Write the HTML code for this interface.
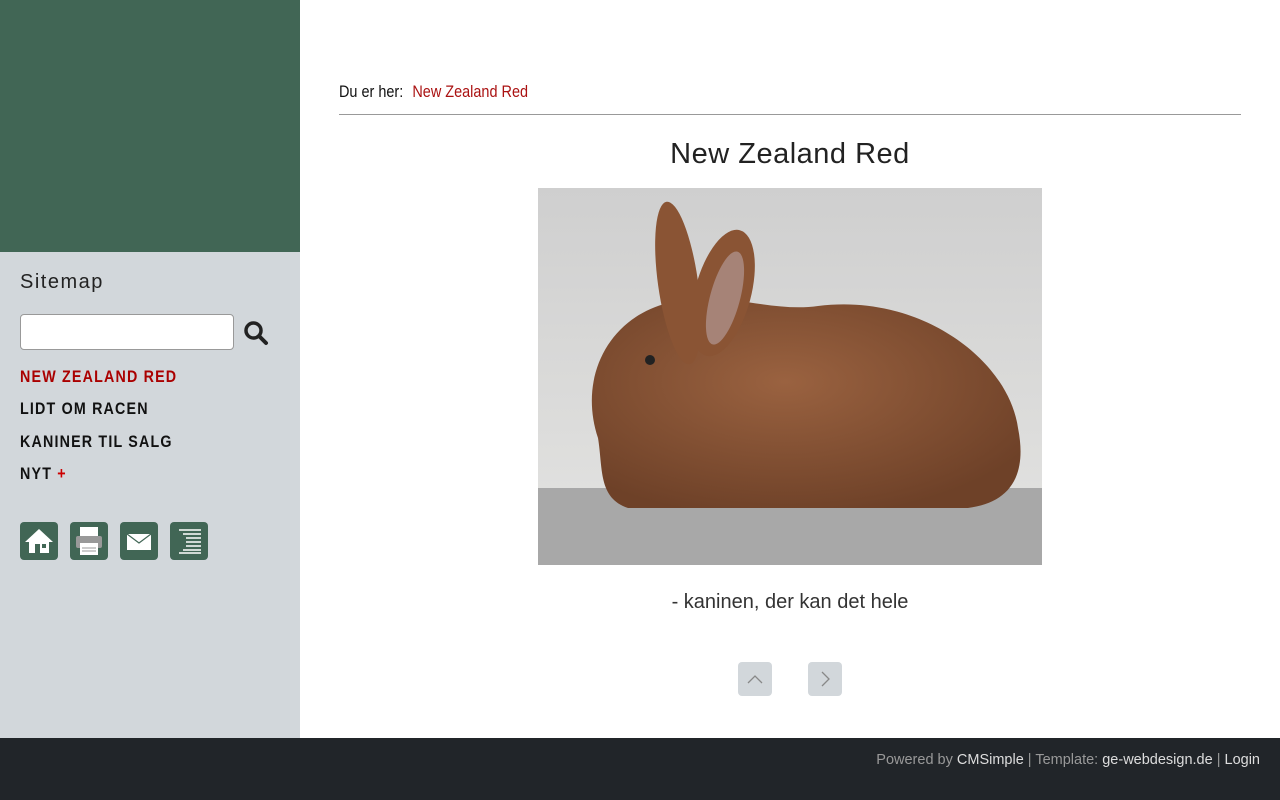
<!DOCTYPE html>
<html><head><meta charset="utf-8"><style>
*{margin:0;padding:0;box-sizing:border-box}
body{width:1280px;height:800px;position:relative;background:#fff;font-family:"Liberation Sans",sans-serif;overflow:hidden}
#hdr{position:absolute;left:0;top:0;width:300px;height:252px;background:#416655}
#side{position:absolute;left:0;top:252px;width:300px;height:486px;background:#d2d7db}
#foot{position:absolute;left:0;top:738px;width:1280px;height:62px;background:#212529;color:#999;font-size:14.5px;text-align:right;padding:14px 20px 0 0}
#foot span{color:#ddd}
.sm{position:absolute;left:20px;top:271px;font-size:20px;color:#222;letter-spacing:1.5px}
.inp{position:absolute;left:20px;top:314px;width:214px;height:36px;background:#fff;border:1px solid #999;border-radius:4px}
.nav{position:absolute;left:20px;font-weight:bold;font-size:17px;letter-spacing:1.4px;color:#111;transform:scaleX(.84);transform-origin:0 0;white-space:nowrap}
.ic{position:absolute;top:522px;width:38px;height:38px;background:#416655;border-radius:4px}
.bc{position:absolute;left:339px;top:82px;font-size:17px;color:#111;transform:scaleX(.85);transform-origin:0 0;white-space:nowrap}
.bc span{color:#a11;margin-left:6px}
hr{position:absolute;left:339px;top:114px;width:902px;border:0;border-top:1px solid #999}
h1{position:absolute;left:339px;width:902px;top:138px;text-align:center;font-weight:normal;font-size:29px;color:#222;letter-spacing:.5px}
.cap{position:absolute;left:339px;width:902px;top:591px;text-align:center;font-size:20px;color:#333}
.pg{position:absolute;top:662px;width:34px;height:34px;background:#d2d7db;border-radius:4px}
</style></head><body>
<div id="hdr"></div><div id="side"></div>
<div class="sm">Sitemap</div>
<div class="inp"></div>
<svg style="position:absolute;left:243px;top:320px" width="26" height="26" viewBox="0 0 26 26"><circle cx="10.5" cy="10.5" r="7.5" fill="none" stroke="#222" stroke-width="3.5"/><line x1="16" y1="16" x2="23" y2="23" stroke="#222" stroke-width="4" stroke-linecap="round"/></svg>
<div class="nav" style="top:367px;color:#a00">NEW ZEALAND RED</div>
<div class="nav" style="top:399px">LIDT OM RACEN</div>
<div class="nav" style="top:432px">KANINER TIL SALG</div>
<div class="nav" style="top:464px">NYT <span style="color:#c00">+</span></div>
<div class="ic" style="left:20px"><svg width="38" height="38"><polygon points="19,7 33,20 29,20 29,31 9,31 9,20 5,20" fill="#fff"/><rect x="15" y="22" width="5" height="9" fill="#416655"/><rect x="22" y="22" width="4" height="4" fill="#416655"/></svg></div>
<div class="ic" style="left:70px"><svg width="38" height="38"><rect x="10" y="5" width="18" height="9" fill="#fff"/><rect x="6" y="14" width="26" height="12" rx="2" fill="#999"/><rect x="10" y="21" width="18" height="12" fill="#fff"/><line x1="12" y1="26" x2="26" y2="26" stroke="#999"/><line x1="12" y1="29" x2="26" y2="29" stroke="#999"/></svg></div>
<div class="ic" style="left:120px"><svg width="38" height="38"><rect x="7" y="12" width="24" height="16" fill="#fff"/><polyline points="7,12 19,21 31,12" fill="none" stroke="#416655" stroke-width="1.2"/></svg></div>
<div class="ic" style="left:170px"><svg width="38" height="38" stroke="#fff" stroke-width="1.5"><line x1="9" y1="8" x2="31" y2="8"/><line x1="13" y1="12" x2="31" y2="12"/><line x1="16" y1="16" x2="31" y2="16"/><line x1="16" y1="20" x2="31" y2="20"/><line x1="16" y1="24" x2="31" y2="24"/><line x1="13" y1="28" x2="31" y2="28"/><line x1="9" y1="31" x2="31" y2="31"/></svg></div>
<div class="bc">Du er her: <span>New Zealand Red</span></div>
<hr>
<h1>New Zealand Red</h1>
<svg style="position:absolute;left:538px;top:188px" width="504" height="377" viewBox="0 0 504 377">
<defs><radialGradient id="f" cx="45%" cy="40%" r="65%"><stop offset="0" stop-color="#9a6240"/><stop offset="1" stop-color="#6e4128"/></radialGradient>
<linearGradient id="bg" x1="0" y1="0" x2="0" y2="1"><stop offset="0" stop-color="#cfcfcf"/><stop offset="1" stop-color="#e4e4e2"/></linearGradient></defs>
<rect width="504" height="377" fill="url(#bg)"/>
<rect y="300" width="504" height="77" fill="#a8a8a8"/>
<path d="M60,250 C40,190 70,130 130,115 C180,100 230,125 280,118 C380,105 470,170 480,240 C490,290 470,315 430,320 L90,320 C60,310 65,280 60,250 Z" fill="url(#f)"/>
<ellipse cx="140" cy="95" rx="20" ry="82" transform="rotate(-8 140 95)" fill="#8a5434"/>
<ellipse cx="185" cy="105" rx="28" ry="65" transform="rotate(15 185 105)" fill="#8a5434"/>
<ellipse cx="187" cy="110" rx="15" ry="48" transform="rotate(15 187 110)" fill="#a68377"/>
<circle cx="112" cy="172" r="5" fill="#222"/>
</svg>
<div class="cap">- kaninen, der kan det hele</div>
<div class="pg" style="left:738px"><svg width="34" height="34"><polyline points="10,21 17,14 24,21" fill="none" stroke="#888" stroke-width="1.3"/></svg></div>
<div class="pg" style="left:808px"><svg width="34" height="34"><polyline points="14,10 21,17 14,24" fill="none" stroke="#888" stroke-width="1.3"/></svg></div>
<div id="foot">Powered by <span>CMSimple</span> | Template: <span>ge-webdesign.de</span> | <span>Login</span></div>
</body></html>
